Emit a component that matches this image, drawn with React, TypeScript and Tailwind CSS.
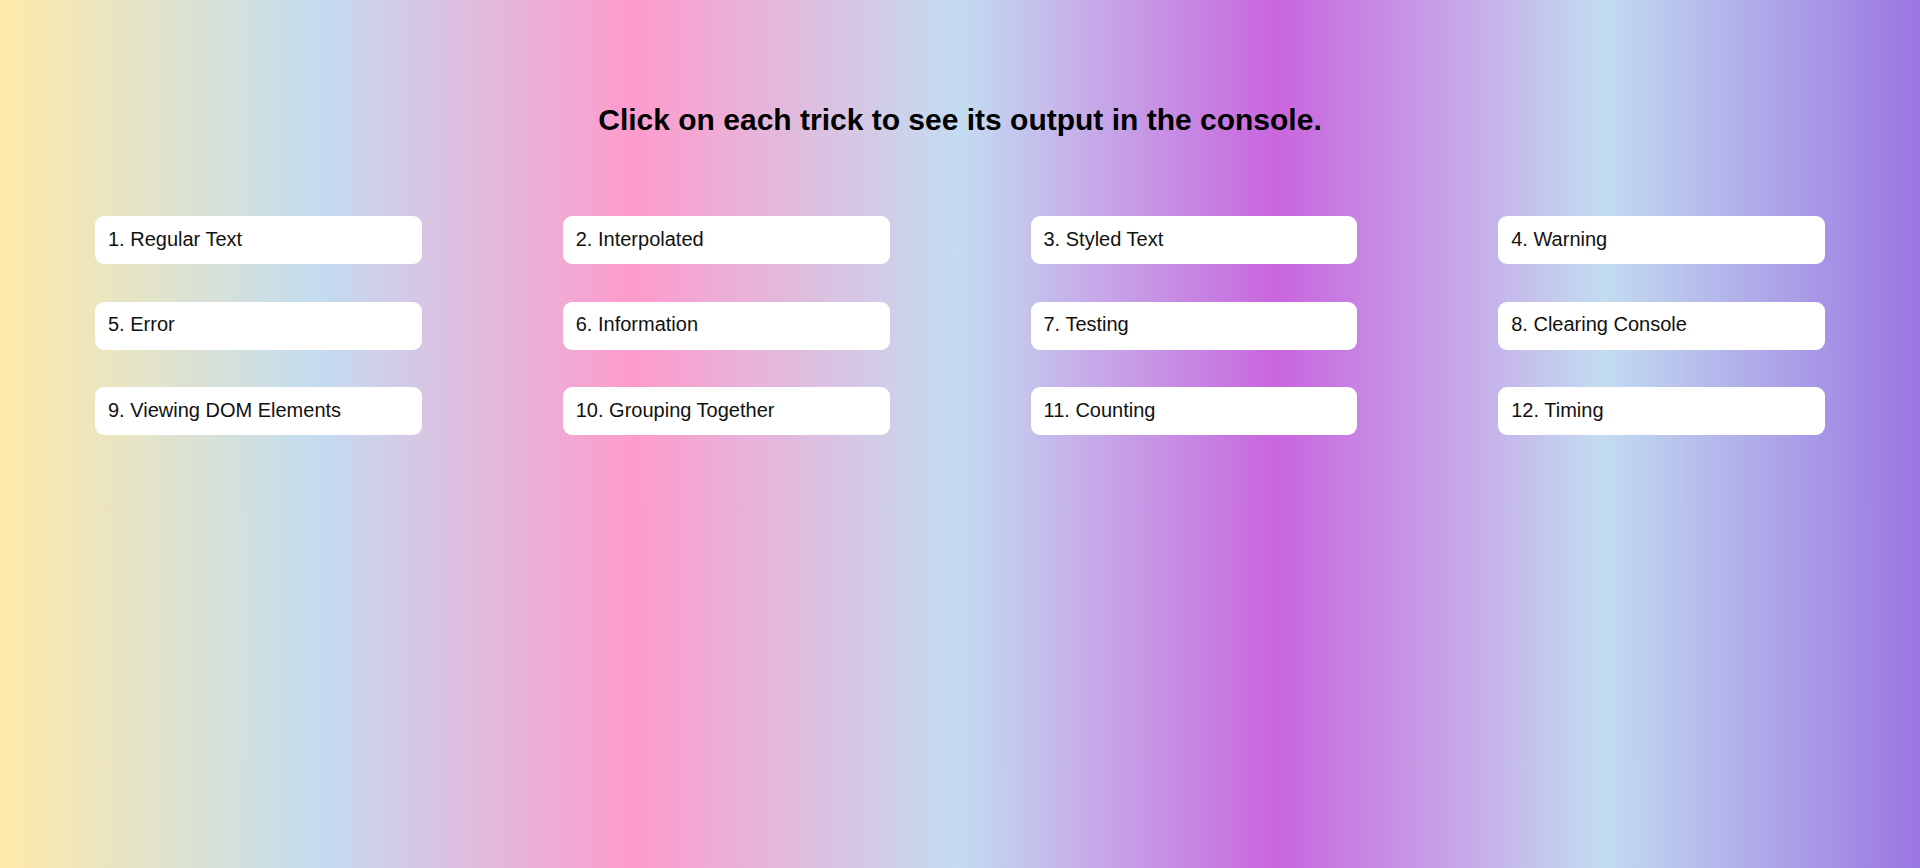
import React from "react";

const tricks = [
  "1. Regular Text",
  "2. Interpolated",
  "3. Styled Text",
  "4. Warning",
  "5. Error",
  "6. Information",
  "7. Testing",
  "8. Clearing Console",
  "9. Viewing DOM Elements",
  "10. Grouping Together",
  "11. Counting",
  "12. Timing",
];

export default function App() {
  return (
    <div
      className="min-h-[868px] w-full bg-[linear-gradient(to_right,#ffeaa7_0%,#c3dcf0_16.5%,#fd9bcc_33%,#c3dcf0_50%,#c965de_66.5%,#c3dcf0_83.5%,#9a76e1_100%)] font-['Liberation_Sans',Arial,sans-serif] text-black"
    >
      <h1 className="pt-[103px] text-center text-[30px] font-bold leading-[34.5px]">
        Click on each trick to see its output in the console.
      </h1>
      <div className="mt-[78.5px] grid grid-cols-4 gap-x-[141px] gap-y-[37.5px] px-[95px]">
        {tricks.map((t) => (
          <div
            key={t}
            className="flex h-[48px] cursor-pointer items-center rounded-[9px] bg-white pb-[2px] pl-[13px] text-[20px] leading-[23px] text-[#111]"
          >
            {t}
          </div>
        ))}
      </div>
    </div>
  );
}
